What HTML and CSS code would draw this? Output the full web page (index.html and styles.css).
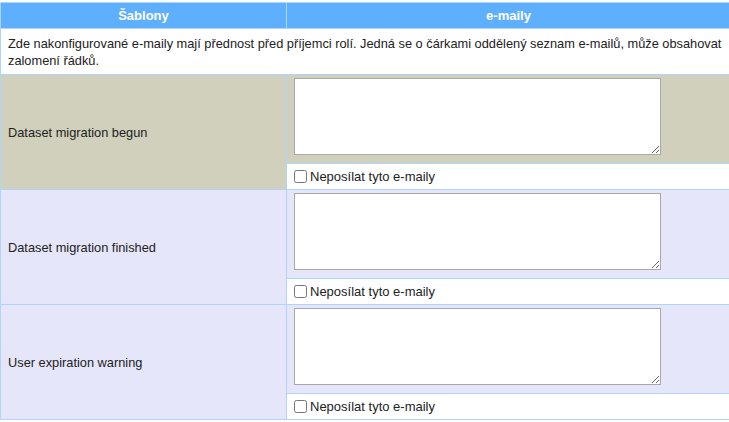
FILE: index.html
```html
<!DOCTYPE html>
<html lang="cs">
<head>
    <meta charset="UTF-8">
    <title>Šablony e-mailů</title>
    <link rel="stylesheet" href="styles.css">
</head>
<body>
    <table class="templates">
        <tr>
            <th class="col-name">Šablony</th>
            <th>e-maily</th>
        </tr>
        <tr>
            <td colspan="2" class="note">Zde nakonfigurované e-maily mají přednost před příjemci rolí. Jedná se o čárkami oddělený seznam e-mailů, může obsahovat zalomení řádků.</td>
        </tr>

        <tr class="tan">
            <td rowspan="2" class="name">Dataset migration begun</td>
            <td class="mails"><textarea></textarea></td>
        </tr>
        <tr>
            <td class="skip"><label><input type="checkbox">Neposílat tyto e-maily</label></td>
        </tr>

        <tr class="lavender">
            <td rowspan="2" class="name">Dataset migration finished</td>
            <td class="mails"><textarea></textarea></td>
        </tr>
        <tr>
            <td class="skip"><label><input type="checkbox">Neposílat tyto e-maily</label></td>
        </tr>

        <tr class="lavender">
            <td rowspan="2" class="name">User expiration warning</td>
            <td class="mails"><textarea></textarea></td>
        </tr>
        <tr>
            <td class="skip"><label><input type="checkbox">Neposílat tyto e-maily</label></td>
        </tr>
    </table>
</body>
</html>
```

FILE: styles.css
```css
body {
    margin: 0;
    overflow: hidden;
    font-family: 'Liberation Sans', Arial, sans-serif;
    font-size: 12.8px;
    color: #222;
    background-color: #ffffff;
}
.templates {
    margin-top: 2px;
    width: 731px;
    border-collapse: collapse;
}
.templates th,
.templates td {
    border: 1px solid #aed6fb;
}
.templates th {
    background-color: #5fafff;
    color: #ffffff;
    font-size: 13px;
    font-weight: bold;
    padding: 5px 7px;
    line-height: 15px;
}
.col-name {
    width: 271px;
}
.note {
    line-height: 17px;
    padding: 6px 5px 5px 7px;
    background-color: #ffffff;
}
.name {
    padding: 0 7px;
    vertical-align: middle;
}
.tan td {
    background-color: #d0d0bc;
}
.lavender td {
    background-color: #e6e6fa;
}
.mails {
    padding: 3px 7px 8px;
}
.mails textarea {
    display: block;
    width: 367px;
    height: 77px;
    box-sizing: border-box;
    border: 1px solid #a9a9a9;
    margin: 0;
}
.skip {
    background-color: #ffffff;
    font-size: 13px;
    padding: 0 7px;
}
.skip label {
    display: flex;
    align-items: center;
    height: 25px;
}
.skip input {
    margin: 0 3px 0 0;
    width: 13px;
    height: 13px;
}
```
